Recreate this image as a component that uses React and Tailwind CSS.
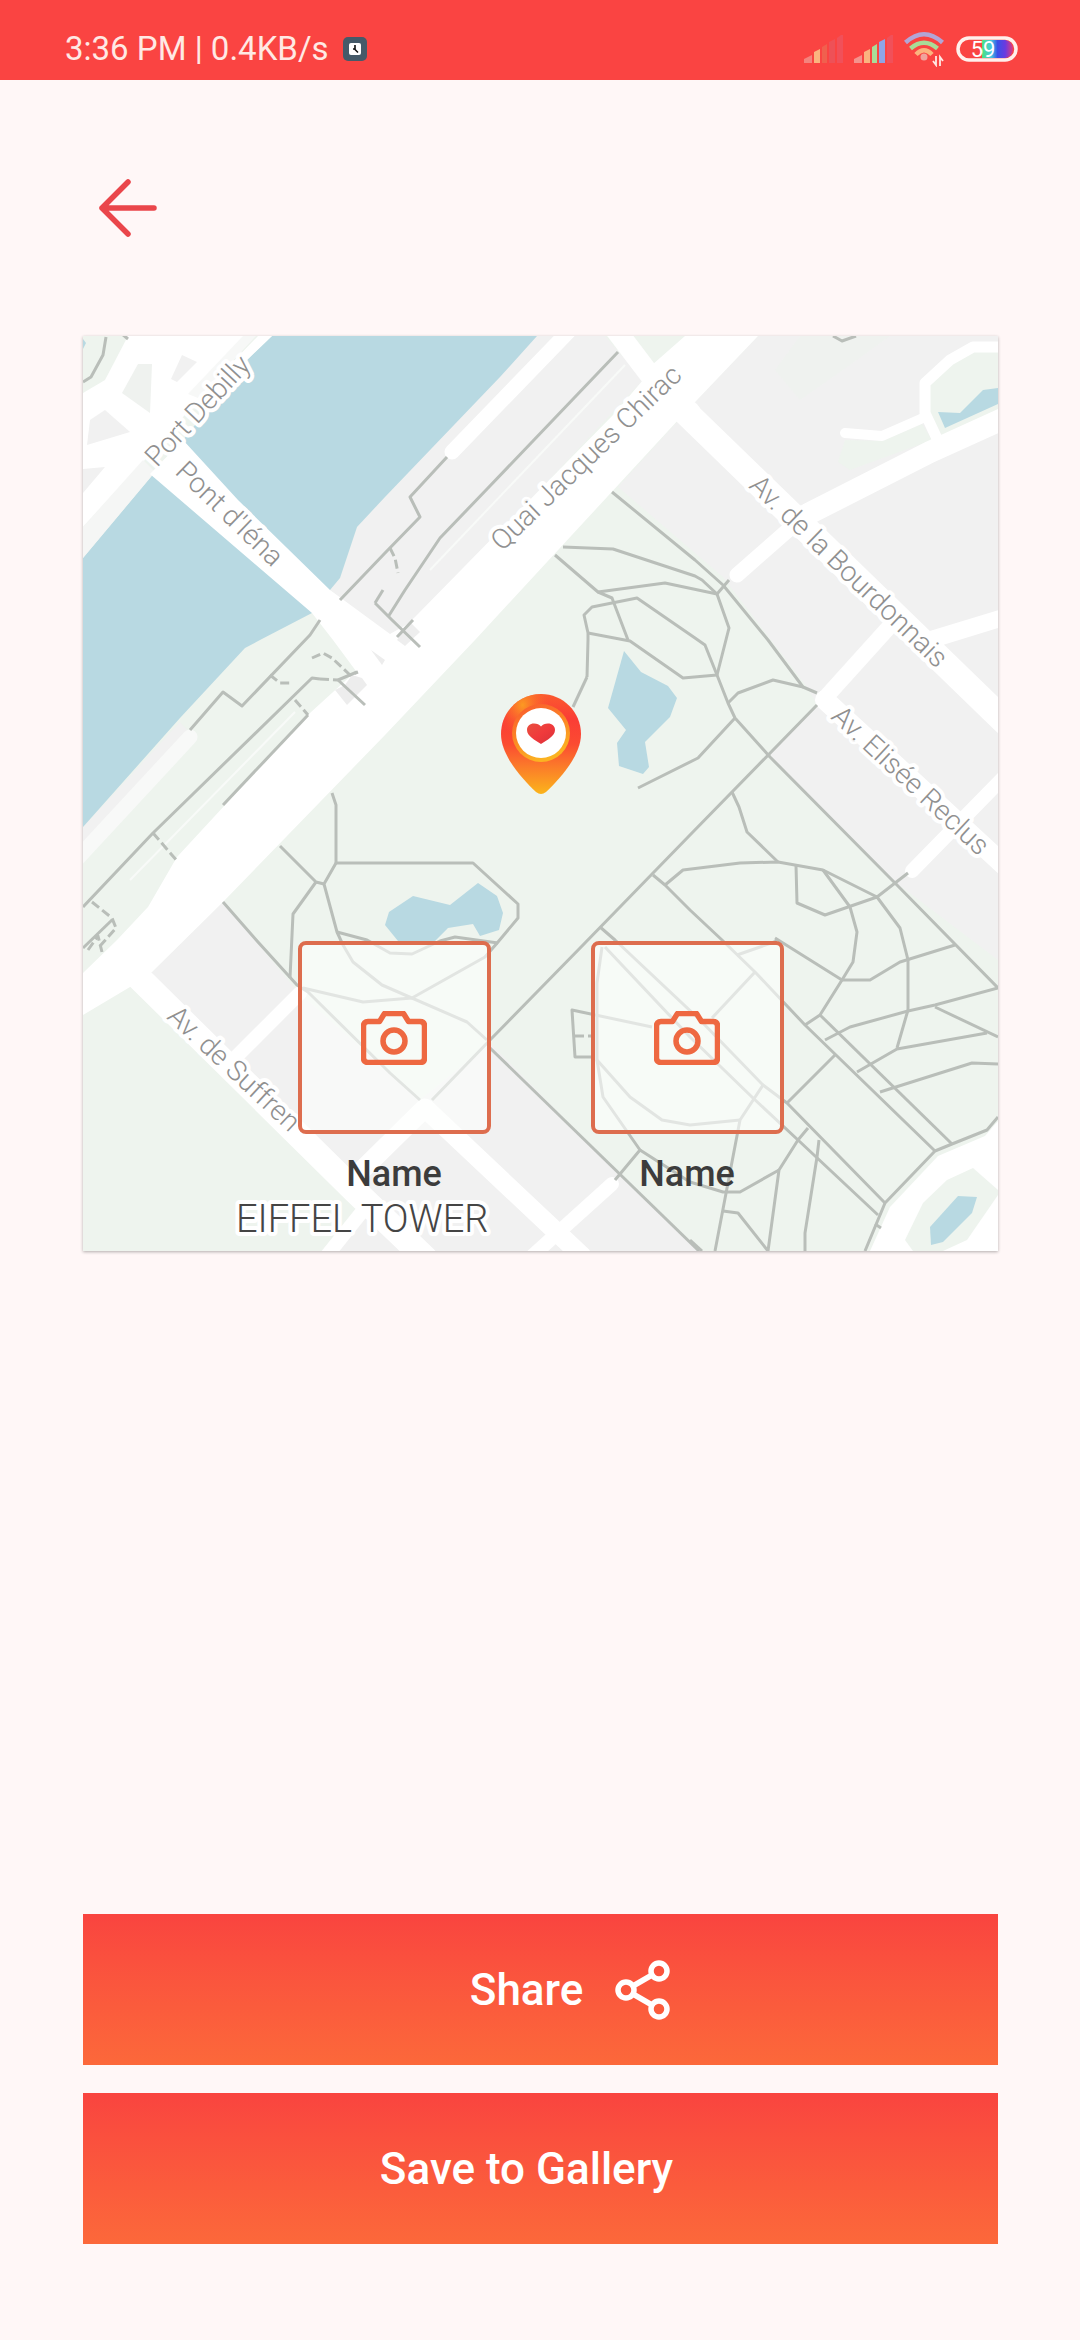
import React from 'react';

const WATER = '#b8d9e2';
const PARK = '#eef4ee';
const BLOCK = '#f1f1f1';

const footpaths = [
  '83,382 91,377 103,355 106,337',
  '122,334 128,339',
  '340,600 385,553 420,517 410,497 447,457',
  '388,617 405,590 440,538 488,488 618,352',
  '413,620 397,637',
  '375,603 392,620 420,647',
  '383,590 375,603',
  '320,620 310,635 242,706 223,692 190,730',
  '83,907 153,833 312,678 320,679',
  '338,680 357,672',
  '338,680 365,705',
  '83,948 112,920',
  '308,715 223,805',
  '612,492 695,560 723,585 768,640 803,687 817,693',
  '563,547 613,549 695,576 702,580 717,594 729,580',
  '555,555 598,592 665,583 717,594',
  '598,592 612,598 628,640',
  '587,677 588,640 588,633 584,615 592,607 637,598 695,638 705,645 717,675 728,703 735,718 770,757 895,883 998,988',
  '587,677 573,707',
  '588,633 630,641 683,678 717,675 729,628 717,594',
  '728,703 738,693 773,680 803,687',
  '735,718 698,758 638,788',
  '817,705 690,835 583,945 490,1040 432,1100',
  '732,792 739,807 747,832 778,862',
  '665,885 683,870 740,863 778,862 823,870 877,897 908,873',
  '796,865 797,903 825,915 877,897 900,928 908,960 908,1010 897,1048',
  '823,870 850,907 857,932 853,962 842,980 820,1015 805,1025',
  '653,875 665,885 690,910 722,940 755,972 805,1025 935,1151',
  '600,927 615,940 700,1020 763,1085 787,1103 885,1203',
  '605,947 690,1037 753,1098 798,1140 878,1215',
  '775,938 842,980 870,980 900,962 955,945',
  '737,955 777,941',
  '755,972 712,1018',
  '825,1040 850,1027 908,1011 935,1005 998,988',
  '935,1007 998,1037',
  '857,1072 897,1049 987,1033',
  '880,1092 972,1063 998,1064',
  '820,1015 952,1144',
  '835,1055 787,1103',
  '998,1117 987,1130 952,1144 935,1151 885,1203 865,1251',
  '808,1128 798,1140 779,1170 768,1251',
  '819,1140 817,1157 805,1233 805,1251',
  '779,1170 740,1192 723,1192 690,1182 640,1150',
  '763,1085 740,1120 715,1251',
  '740,1120 690,1125 662,1120 630,1097 597,1060 597,983 602,947',
  '597,1060 603,1097 640,1150 615,1180',
  '652,1027 572,1010 575,1057 595,1057',
  '490,1048 699,1251',
  '723,1211 738,1213 768,1251',
  '690,1240 702,1251',
  '332,793 336,805 336,863 473,863 518,904 518,918 498,942 485,957 412,998 363,1002 303,988',
  '336,863 324,884 337,932 343,945 353,962 382,985 467,1022 487,1040',
  '337,932 367,940 390,953 412,954 440,941 455,937 498,943',
  '280,846 316,882 324,884',
  '316,882 293,914 290,978',
  '223,902 258,942 297,985 308,992 390,1073 420,1100',
  '833,336 842,341 856,336',
  '875,1224 881,1228',
];

const dashedPaths = [
  '390,548 395,558 398,573',
  '312,658 323,653 332,658 350,675 358,672',
  '320,679 338,680',
  '270,675 280,683 293,683',
  '295,700 308,715',
  '153,833 178,862',
  '92,902 112,918 116,928 100,946',
  '575,1036 595,1036',
  '88,950 98,936 102,952',
];

// [points, width]
const streets = [
  ['612,325 650,375 690,412', 21],
  ['675,402 1005,722', 26],
  ['1005,418 930,452 808,514', 22],
  ['795,524 737,575', 15],
  ['1005,347 973,347 950,360 925,383 925,413 940,445', 11],
  ['923,418 882,436 845,433', 10],
  ['920,643 1005,617', 17],
  ['890,626 825,698', 16],
  ['825,700 1005,866', 20],
  ['1003,778 912,871', 14],
  ['452,452 570,330', 15],
  ['125,964 355,1191 425,1258', 25],
  ['236,1057 300,993', 14],
  ['325,1258 365,1208', 14],
  ['362,1170 425,1108 582,1256', 19],
  ['530,1258 612,1184', 14],
];

const streetNames = [
  { name: 'Port Debilly', x: 157, y: 468, angle: -47 },
  { name: "Pont d'Iéna", x: 174, y: 473, angle: 44 },
  { name: 'Quai Jacques Chirac', x: 502, y: 552, angle: -44 },
  { name: 'Av. de la Bourdonnais', x: 748, y: 487, angle: 44 },
  { name: 'Av. Elisée Reclus', x: 830, y: 718, angle: 43 },
  { name: 'Av. de Suffren', x: 166, y: 1018, angle: 43 },
];

const CityMap = () => (
  <svg viewBox="83 336 915 915" className="block h-full w-full" role="img" aria-label="Map of the Eiffel Tower area">
    <rect x="83" y="336" width="915" height="915" fill={PARK} />

    {/* city blocks */}
    <g fill={BLOCK}>
      <polygon points="537,336 385,497 357,527 340,578 330,590 390,636 420,617 643,380 605,336" />
      <polygon points="758,336 697,400 618,487 723,577 807,687 817,705 770,755 890,878 998,960 998,336" />
      <polygon points="130,960 152,972 223,902 298,992 420,1100 490,1043 620,1175 700,1251 330,1251 362,1208" />
      <polygon points="83,827 180,722 187,730 83,850" />
    </g>
    <g fill={PARK}>
      <polygon points="930,385 952,364 975,352 998,352 998,410 942,436 930,412" />
      <polygon points="845,440 882,441 922,424 932,440 850,470 838,462" />
      <polygon points="775,370 800,336 890,336 850,365 800,400" opacity="0.6" />
      <polygon points="625,336 690,336 650,372" />
    </g>

    {/* Seine */}
    <polygon
      fill={WATER}
      points="272,336 537,336 500,377 385,497 357,527 340,578 330,590 312,613 260,640 245,648 180,718 83,827 83,558 155,472 183,440 247,360"
    />

    {/* right bank junction */}
    <polygon fill="#fff" points="83,336 255,336 143,462 83,527" />
    <polygon fill="#f5f6f5" points="83,527 143,460 155,472 83,558" />
    <polygon fill="#f7f8f7" points="188,394 243,336 256,336 198,398" />
    <polygon fill="#fff" points="198,398 258,336 272,336 247,360 200,418" />
    <g fill={BLOCK}>
      <polygon points="182,355 197,362 177,382 171,379" />
      <polygon points="138,364 152,364 150,413 122,393" fill="#eff2ef" />
      <polygon points="105,410 130,432 87,445 90,420" />
      <polygon points="83,469 105,467 83,493" />
    </g>
    <polygon fill={PARK} points="83,336 128,336 105,380 83,393" />
    <polygon fill={WATER} points="83,339 86,343 83,349" />

    {/* Pont d'Iéna and the quay */}
    <polygon fill="#fff" points="150,474 183,440 238,500 330,590 390,634 420,617 370,690 333,640 312,613" />
    <polygon
      fill="#fff"
      points="758,336 697,400 680,418 475,640 385,735 223,902 152,972 130,987 83,1015 83,973 117,940 148,907 177,857 310,713 355,672 415,617 615,413 643,380 652,365 685,336"
    />
    <polygon fill="#ededed" points="335,690 345,685 352,675 362,678 367,685 347,705" />
    <polygon fill="#ededed" points="371,650 385,660 382,665" />
    <polygon fill="#eeeeee" points="397,640 410,622 420,632 405,646" />
    <polyline points="190,737 78,858" fill="none" stroke="#f8f9f8" strokeWidth="15" strokeLinecap="round" />
    <g stroke="#f8faf8" strokeWidth="2" fill="none">
      <polyline points="625,365 430,570" />
      <polyline points="295,712 130,880" />
    </g>

    <g fill="none" stroke="#fff" strokeLinejoin="round" strokeLinecap="round">
      {streets.map(([points, width]) => (
        <polyline key={points} points={points} strokeWidth={width} />
      ))}
    </g>

    {/* roundabout */}
    <polygon fill="#fff" points="998,1121 985,1136 938,1156 890,1207 870,1251 998,1251" />
    <polygon fill={PARK} points="973,1168 998,1190 998,1195 967,1240 943,1251 913,1251 905,1240 923,1203 947,1180" />

    {/* ponds */}
    <g fill={WATER}>
      <polygon points="624,651 641,672 668,686 677,698 670,717 645,742 649,767 643,774 619,766 617,743 626,730 608,708" />
      <polygon points="389,912 413,896 450,905 478,883 497,896 503,913 499,930 480,936 473,924 448,928 435,941 398,941 385,925" />
      <polygon points="938,412 960,413 983,390 998,388 998,404 945,428" />
      <polygon points="958,1196 977,1197 972,1213 943,1242 931,1245 930,1227" />
    </g>

    <g fill="none" stroke="#b9beb9" strokeWidth="3" strokeLinejoin="round">
      {footpaths.map((points) => (
        <polyline key={points} points={points} />
      ))}
      {dashedPaths.map((points) => (
        <polyline key={points} points={points} strokeDasharray="9 4" />
      ))}
    </g>

    <g
      fill="#909090"
      stroke="#fff"
      strokeWidth="8"
      strokeLinejoin="round"
      className="font-[Roboto,sans-serif] text-[28px] font-light [paint-order:stroke]"
    >
      {streetNames.map(({ name, x, y, angle }) => (
        <text key={name} transform={`translate(${x} ${y}) rotate(${angle})`}>
          {name}
        </text>
      ))}
    </g>
    <text
      x="236"
      y="1232"
      fill="#454545"
      stroke="#fff"
      strokeWidth="8"
      strokeLinejoin="round"
      className="font-[Roboto,sans-serif] text-[38px] font-light [paint-order:stroke]"
    >
      EIFFEL TOWER
    </text>
  </svg>
);

const HeartPin = () => (
  <svg viewBox="0 0 80 100" className="h-[100px] w-20">
    <defs>
      <linearGradient id="pinBody" x1="0" y1="0" x2="0" y2="1">
        <stop offset="0" stopColor="#fb5a2e" />
        <stop offset="0.25" stopColor="#fa3d36" />
        <stop offset="0.5" stopColor="#fb4b31" />
        <stop offset="0.72" stopColor="#fb7a2a" />
        <stop offset="1" stopColor="#fbb41b" />
      </linearGradient>
      <radialGradient id="pinGlow" cx="0.27" cy="0.11" r="0.32">
        <stop offset="0" stopColor="#fc9a22" />
        <stop offset="1" stopColor="#fc6a2a" stopOpacity="0" />
      </radialGradient>
      <linearGradient id="pinRing" x1="0" y1="0" x2="0.4" y2="1">
        <stop offset="0" stopColor="#f9572f" />
        <stop offset="0.5" stopColor="#fb8226" />
        <stop offset="1" stopColor="#fbb321" />
      </linearGradient>
      <linearGradient id="pinHeart" x1="0" y1="0" x2="1" y2="1">
        <stop offset="0" stopColor="#e8503f" />
        <stop offset="0.5" stopColor="#f03a3c" />
        <stop offset="1" stopColor="#d8323a" />
      </linearGradient>
    </defs>
    <path d="M40 0C18 0 0 18 0 40c0 20 18 42 35 58q5 4 10 0C62 82 80 60 80 40 80 18 62 0 40 0Z" fill="url(#pinBody)" />
    <path d="M40 0C18 0 0 18 0 40c0 20 18 42 35 58q5 4 10 0C62 82 80 60 80 40 80 18 62 0 40 0Z" fill="url(#pinGlow)" />
    <circle cx="40" cy="39" r="29" fill="url(#pinRing)" />
    <circle cx="40" cy="39" r="25" fill="#fff" />
    <path d="M40 50C34 46 26 42 26 36c0-4 3-6.500 7-6.500 3 0 5.500 1 7 3 1.500-2 4-3 7-3 4 0 7 2.500 7 6.500 0 6-8 10-14 14Z" fill="url(#pinHeart)" />
  </svg>
);

const CameraIcon = () => (
  <svg viewBox="0 0 66 54" className="h-[54px] w-[66px]" fill="none" stroke="#ee6841" strokeWidth="5.500" strokeLinejoin="round">
    <path d="M7 10.500h11.500l5-8h19l5 8H59q4.500 0 4.500 4.500v32q0 4.500-4.500 4.500H7q-4.500 0-4.500-4.500V15q0-4.500 4.500-4.500Z" />
    <circle cx="33" cy="30" r="11" />
  </svg>
);

const PhotoSlot = ({ label }) => (
  <div className="flex flex-col items-center gap-4">
    <button
      type="button"
      aria-label="Add photo"
      className="flex size-[193px] items-center justify-center rounded-lg border-4 border-[#dd6d4e] bg-[#fdfffd]/60"
    >
      <CameraIcon />
    </button>
    <span className="text-4xl leading-[48px] font-medium text-[#3c3c3c]">{label}</span>
  </div>
);

const SignalBars = ({ colors }) => (
  <svg viewBox="0 0 40 28" className="h-7 w-10">
    <path d="M0 28v-4l8-4v8Z" fill={colors[0]} />
    <path d="M10 28V17l6-3v14Z" fill={colors[1]} />
    <path d="M18 28V12l5-3v19Z" fill={colors[2]} />
    <path d="M25 28V7l6-3v24Z" fill={colors[3]} />
    <path d="M33 28V3l4-3h2v28Z" fill={colors[4]} />
  </svg>
);

const WifiIcon = () => (
  <svg viewBox="0 0 40 36" className="h-9 w-10" fill="none" strokeWidth="4.500">
    <path d="M1.500 11.500Q20-5 38.500 11.500" stroke="#b3a5d6" />
    <path d="M6.500 17.500Q20 6 33.500 17.500" stroke="#a9dc97" />
    <path d="M12 23.500Q20 15 28 23.500" stroke="#fbb47f" />
    <circle cx="20" cy="26" r="3.500" fill="#f0a39c" />
    <path d="M32 25v9l-3-4M36 35v-9l3 4" stroke="#ffe9e4" strokeWidth="1.800" />
  </svg>
);

const Battery = () => (
  <svg viewBox="0 0 62 26" className="h-[26px] w-[62px]">
    <defs>
      <linearGradient id="charge" x1="0" x2="1">
        <stop offset="0" stopColor="#4be27c" />
        <stop offset="0.3" stopColor="#47c8e0" />
        <stop offset="0.5" stopColor="#3a50e8" />
        <stop offset="0.75" stopColor="#6a3ae0" />
        <stop offset="1" stopColor="#e03a7a" />
      </linearGradient>
    </defs>
    <path d="M26 4h23a8 9 0 0 1 0 18H26Z" fill="url(#charge)" />
    <rect x="2" y="2" width="58" height="22" rx="11" fill="none" stroke="#fff0ec" strokeWidth="3.500" />
    <text x="27" y="21" textAnchor="middle" fill="#fff" className="font-[Roboto,sans-serif] text-[22px]">
      59
    </text>
  </svg>
);

const StatusBar = () => (
  <div className="flex h-20 items-end justify-between bg-[#fa4442] pr-[62px] pb-[11px] pl-[65px] text-[#ffe9e4]">
    <div className="flex items-center gap-3.5">
      <span className="text-[33px] leading-10">3:36 PM | 0.4KB/s</span>
      <svg viewBox="0 0 24 24" className="size-6">
        <rect width="24" height="24" rx="5" fill="#455a69" />
        <rect x="6" y="6" width="12" height="12" rx="2" fill="#fff" />
        <path d="M12 8v4.500l3 3M10 12h2" fill="none" stroke="#111" strokeWidth="1.600" />
      </svg>
    </div>
    <div className="flex h-10 items-center gap-2.5">
      <SignalBars colors={['#f4837d', '#fbb47f', '#f0604e', '#ee5157', '#f15059']} />
      <SignalBars colors={['#f4938d', '#fbb47f', '#a9dc97', '#8fa5e6', '#f15059']} />
      <div className="flex items-center gap-3">
        <WifiIcon />
        <Battery />
      </div>
    </div>
  </div>
);

const App = () => {
  return (
    <div className="flex min-h-screen flex-col bg-[#fff7f7] font-[Roboto,sans-serif]">
      <StatusBar />

      <main className="flex grow flex-col pt-24 pr-[82px] pb-24 pl-[83px]">
        <button type="button" aria-label="Back" className="ml-4 self-start">
          <svg viewBox="0 0 60 64" className="h-16 w-[60px]" fill="none" stroke="#ea464b" strokeWidth="5.500" strokeLinecap="round" strokeLinejoin="round">
            <path d="M29 6 3 32l26 26M3 32h52" />
          </svg>
        </button>

        <div className="relative mt-24 aspect-square overflow-hidden shadow-[0_1px_3px_rgba(0,0,0,0.3)]">
          <CityMap />
          <div className="absolute bottom-1/2 left-1/2 -translate-x-1/2">
            <HeartPin />
          </div>
          <div className="absolute inset-x-0 bottom-[53px] flex justify-center gap-[100px]">
            <PhotoSlot label="Name" />
            <PhotoSlot label="Name" />
          </div>
        </div>

        <div className="mt-auto flex flex-col gap-7 text-[44px] font-medium text-white">
          <button type="button" className="flex h-[151px] items-center justify-center gap-8 bg-linear-to-b from-[#f9443f] to-[#fc683a] pl-[60px]">
            Share
            <svg viewBox="0 0 56 60" className="h-[60px] w-14" fill="none" stroke="#fff" strokeWidth="5.500">
              <circle cx="11" cy="30" r="8" />
              <circle cx="44" cy="11" r="8" />
              <circle cx="44" cy="49" r="8" />
              <path d="m18 26 19-11M18 34l19 11" />
            </svg>
          </button>
          <button type="button" className="h-[151px] bg-linear-to-b from-[#f9443f] to-[#fc683a] pr-7">
            Save to Gallery
          </button>
        </div>
      </main>
    </div>
  );
};

export default App;
